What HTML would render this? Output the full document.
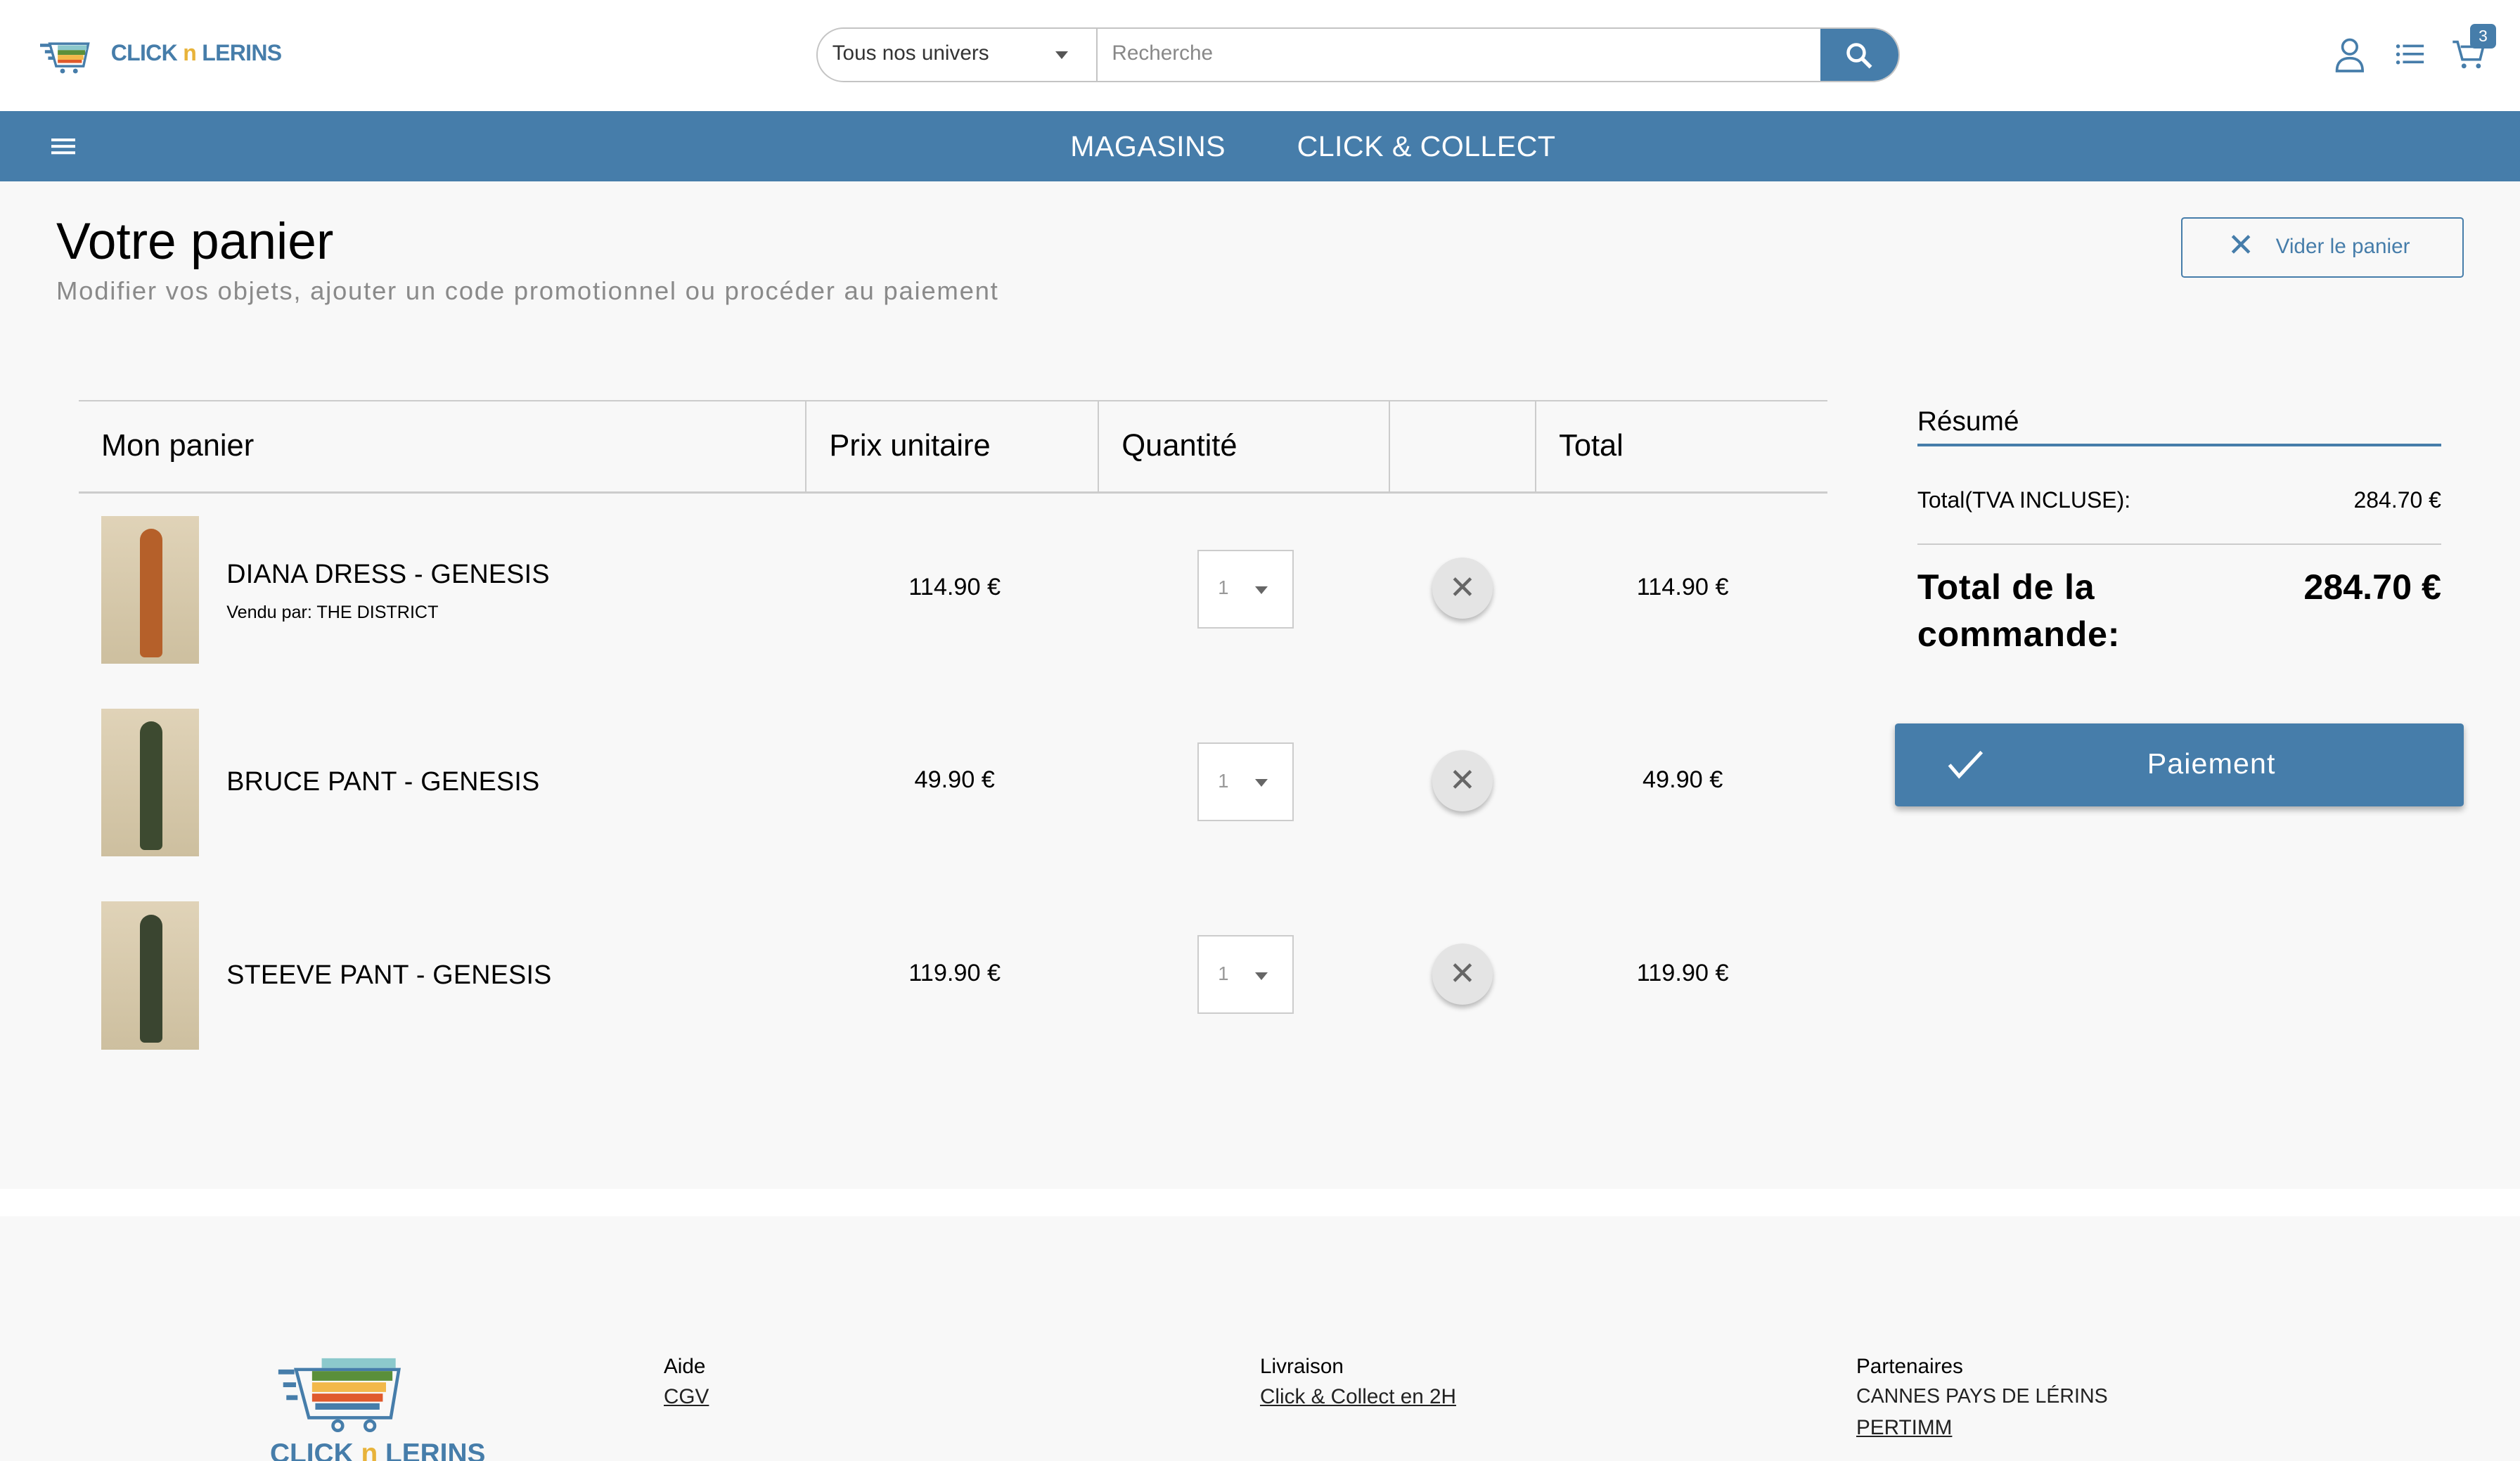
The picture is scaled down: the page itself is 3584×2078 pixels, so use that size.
<!DOCTYPE html>
<html><head><meta charset="utf-8"><style>
*{margin:0;padding:0;box-sizing:border-box}
html,body{width:3584px;height:2078px;overflow:hidden;background:#f8f8f8}
#w{zoom:2.285714;width:1568px;height:909px;position:relative;font-family:"Liberation Sans",sans-serif;color:#000}
.a{position:absolute}
.blue{color:#467daa}
.hdr{left:0;top:0;width:1568px;height:69px;background:#fff}
.nav{left:0;top:69px;width:1568px;height:44px;background:#467daa}
.navt{color:#fff;font-size:18px;font-weight:300;top:81px;letter-spacing:0.2px}
.th{font-size:19px;top:267px}
.vl{top:250px;width:1px;height:56px;background:#ccc}
.img{width:61px;height:92px;background:linear-gradient(#e0d3b8,#cdbf9f);left:63px;overflow:hidden}
.fig{position:absolute;left:24px;top:8px;width:14px;height:80px;border-radius:7px 7px 3px 3px}
.name{left:141px;font-size:16.5px;font-weight:300;letter-spacing:0.1px}
.pr{font-size:15px;width:120px;text-align:center}
.qty{left:745px;width:60px;height:49px;border:1px solid #ccc;background:#fff}
.qty span{position:absolute;left:12px;top:16px;font-size:12px;color:#999}
.qty i{position:absolute;left:35px;top:22px;border:4px solid transparent;border-top:5px solid #666}
.rm{left:891px;width:38px;height:38px;border-radius:50%;background:#e4e4e4;box-shadow:0 2px 3px rgba(0,0,0,.25);color:#666;font-size:20px;text-align:center;line-height:38px}
.fh{font-size:13px;top:843px}
.fl{font-size:13px;font-weight:300;color:#222}
</style></head><body><div id="w">
<div class="a hdr"></div>
<svg class="a" style="left:25px;top:23px" width="34" height="23" viewBox="0 0 34 23"><rect x="0" y="4" width="6" height="2" fill="#467daa"/><rect x="3" y="8" width="5" height="2" fill="#467daa"/><rect x="5" y="12" width="4" height="2" fill="#467daa"/><path d="M6 4h24l-3 14H10z" fill="none" stroke="#467daa" stroke-width="1.5"/><rect x="11" y="5" width="18" height="3" fill="#8cc9cc"/><rect x="11" y="8" width="17" height="3" fill="#5a8f3a"/><rect x="11" y="11" width="16" height="3" fill="#f2b84a"/><rect x="11" y="14" width="15" height="2" fill="#e05a2c"/><circle cx="14" cy="21" r="1.5" fill="#467daa"/><circle cx="22" cy="21" r="1.5" fill="#467daa"/></svg>
<div class="a blue" style="left:69px;top:25px;font-size:14px;font-weight:bold;letter-spacing:-0.3px">CLICK <span style="color:#e8b33a">n</span> LERINS</div>
<div class="a" style="left:508px;top:17px;width:674px;height:34px;border:1px solid #c4c4c4;border-radius:17px;background:#fff;overflow:hidden">
<div class="a" style="left:173px;top:0;width:1px;height:34px;background:#c4c4c4"></div>
<div class="a" style="left:9px;top:8px;font-size:13px;color:#333;font-weight:300">Tous nos univers</div>
<div class="a" style="left:148px;top:14px;border:4px solid transparent;border-top:5px solid #555"></div>
<div class="a" style="left:183px;top:8px;font-size:13px;color:#888;font-weight:300">Recherche</div>
<div class="a" style="left:624px;top:-1px;width:50px;height:35px;background:#467daa"></div>
<svg class="a" style="left:639px;top:8px" width="18" height="18" viewBox="0 0 18 18"><circle cx="7" cy="7" r="5" fill="none" stroke="#fff" stroke-width="2"/><path d="M11 11l5 5" stroke="#fff" stroke-width="2.4"/></svg>
</div>
<svg class="a" style="left:1452px;top:23px" width="20" height="22" viewBox="0 0 20 22"><circle cx="10" cy="6" r="4.5" fill="none" stroke="#467daa" stroke-width="1.6"/><path d="M2 21c0-6 3.5-8 8-8s8 2 8 8z" fill="none" stroke="#467daa" stroke-width="1.6"/></svg>
<svg class="a" style="left:1490px;top:26px" width="19" height="16" viewBox="0 0 19 16"><g fill="#467daa"><circle cx="2" cy="3" r="1.2"/><circle cx="2" cy="8" r="1.2"/><circle cx="2" cy="13" r="1.2"/><rect x="5" y="2" width="13" height="1.6"/><rect x="5" y="7" width="13" height="1.6"/><rect x="5" y="12" width="13" height="1.6"/></g></svg>
<svg class="a" style="left:1525px;top:24px" width="22" height="20" viewBox="0 0 22 20"><path d="M1 2h3l3 11h11l2-8H6" fill="none" stroke="#467daa" stroke-width="1.6"/><circle cx="8" cy="17" r="1.5" fill="#467daa"/><circle cx="17" cy="17" r="1.5" fill="#467daa"/></svg>
<div class="a" style="left:1537px;top:15px;width:16px;height:15px;background:#467daa;border-radius:3px;color:#fff;font-size:10px;text-align:center;line-height:15px">3</div>
<div class="a nav"></div>
<div class="a" style="left:32px;top:86px;width:15px;height:2px;background:#fff;box-shadow:0 4px 0 #fff,0 8px 0 #fff"></div>
<div class="a navt" style="left:666px">MAGASINS</div>
<div class="a navt" style="left:807px">CLICK &amp; COLLECT</div>
<div class="a" style="left:35px;top:132px;font-size:32px">Votre panier</div>
<div class="a" style="left:35px;top:172px;font-size:16px;color:#8a8a8a;letter-spacing:0.75px">Modifier vos objets, ajouter un code promotionnel ou procéder au paiement</div>
<div class="a" style="left:1357px;top:135px;width:176px;height:38px;border:1px solid #467daa;border-radius:2px"></div>
<div class="a blue" style="left:1386px;top:141px;font-size:20px;font-weight:300">✕</div>
<div class="a blue" style="left:1416px;top:146px;font-size:13px">Vider le panier</div>
<div class="a" style="left:49px;top:249px;width:1088px;height:1px;background:#ccc"></div>
<div class="a" style="left:49px;top:306px;width:1088px;height:1px;background:#ccc"></div>
<div class="a vl" style="left:501px"></div><div class="a vl" style="left:683px"></div><div class="a vl" style="left:864px"></div><div class="a vl" style="left:955px"></div>
<div class="a th" style="left:63px">Mon panier</div>
<div class="a th" style="left:516px">Prix unitaire</div>
<div class="a th" style="left:698px">Quantité</div>
<div class="a th" style="left:970px">Total</div>

<div class="a img" style="top:321px"><div class="fig" style="background:#b5602a"></div></div>
<div class="a name" style="top:348px">DIANA DRESS - GENESIS</div>
<div class="a" style="left:141px;top:375px;font-size:11px;font-weight:300">Vendu par: THE DISTRICT</div>
<div class="a pr" style="left:534px;top:357px">114.90 €</div>
<div class="a qty" style="top:342px"><span>1</span><i></i></div>
<div class="a rm" style="top:347px">✕</div>
<div class="a pr" style="left:987px;top:357px">114.90 €</div>

<div class="a img" style="top:441px"><div class="fig" style="background:#3d4a30"></div></div>
<div class="a name" style="top:477px">BRUCE PANT - GENESIS</div>
<div class="a pr" style="left:534px;top:477px">49.90 €</div>
<div class="a qty" style="top:462px"><span>1</span><i></i></div>
<div class="a rm" style="top:467px">✕</div>
<div class="a pr" style="left:987px;top:477px">49.90 €</div>

<div class="a img" style="top:561px"><div class="fig" style="background:#3a4530"></div></div>
<div class="a name" style="top:597px">STEEVE PANT - GENESIS</div>
<div class="a pr" style="left:534px;top:597px">119.90 €</div>
<div class="a qty" style="top:582px"><span>1</span><i></i></div>
<div class="a rm" style="top:587px">✕</div>
<div class="a pr" style="left:987px;top:597px">119.90 €</div>

<div class="a" style="left:1193px;top:253px;font-size:17px">Résumé</div>
<div class="a" style="left:1193px;top:276px;width:326px;height:2px;background:#467daa"></div>
<div class="a" style="left:1193px;top:303px;font-size:14px;font-weight:300">Total(TVA INCLUSE):</div>
<div class="a" style="left:1419px;top:303px;width:100px;text-align:right;font-size:14px;font-weight:300">284.70 €</div>
<div class="a" style="left:1193px;top:338px;width:326px;height:1px;background:#ccc"></div>
<div class="a" style="left:1193px;top:351px;font-size:22px;line-height:29px;font-weight:bold;letter-spacing:0.3px">Total de la<br>commande:</div>
<div class="a" style="left:1369px;top:351px;width:150px;text-align:right;font-size:22px;line-height:29px;font-weight:bold">284.70 €</div>
<div class="a" style="left:1179px;top:450px;width:354px;height:52px;background:#467daa;border-radius:2px;box-shadow:0 2px 4px rgba(0,0,0,.3)"></div>
<svg class="a" style="left:1211px;top:466px" width="24" height="20" viewBox="0 0 24 20"><path d="M2 10l6 7L22 2" fill="none" stroke="#fff" stroke-width="2.2"/></svg>
<div class="a" style="left:1279px;top:465px;width:194px;text-align:center;color:#fff;font-size:18px;letter-spacing:0.5px">Paiement</div>

<div class="a" style="left:0;top:740px;width:1568px;height:17px;background:#fff"></div>
<svg class="a" style="left:170px;top:842px" width="82" height="50" viewBox="0 0 82 50"><rect x="3" y="10" width="10" height="3" fill="#467daa"/><rect x="6" y="18" width="8" height="3" fill="#467daa"/><rect x="8" y="26" width="7" height="3" fill="#467daa"/><path d="M14 10h64l-5 30H22z" fill="none" stroke="#467daa" stroke-width="2"/><rect x="30" y="3" width="46" height="6" fill="#8cc9cc"/><rect x="24" y="11" width="50" height="6" fill="#5a8f3a"/><rect x="24" y="18" width="46" height="6" fill="#f2b84a"/><rect x="24" y="25" width="44" height="5" fill="#e05a2c"/><rect x="26" y="31" width="40" height="4" fill="#467daa"/><circle cx="40" cy="45" r="3" fill="none" stroke="#467daa" stroke-width="2"/><circle cx="60" cy="45" r="3" fill="none" stroke="#467daa" stroke-width="2"/></svg>
<div class="a blue" style="left:168px;top:895px;font-size:17px;font-weight:bold">CLICK <span style="color:#e8b33a">n</span> LERINS</div>
<div class="a fh" style="left:413px">Aide</div>
<div class="a fl" style="left:413px;top:862px;text-decoration:underline">CGV</div>
<div class="a fh" style="left:784px">Livraison</div>
<div class="a fl" style="left:784px;top:862px;text-decoration:underline">Click &amp; Collect en 2H</div>
<div class="a fh" style="left:1155px">Partenaires</div>
<div class="a fl" style="left:1155px;top:862px;font-size:12.5px">CANNES PAYS DE LÉRINS</div>
<div class="a fl" style="left:1155px;top:881px;text-decoration:underline">PERTIMM</div>
</div></body></html>
